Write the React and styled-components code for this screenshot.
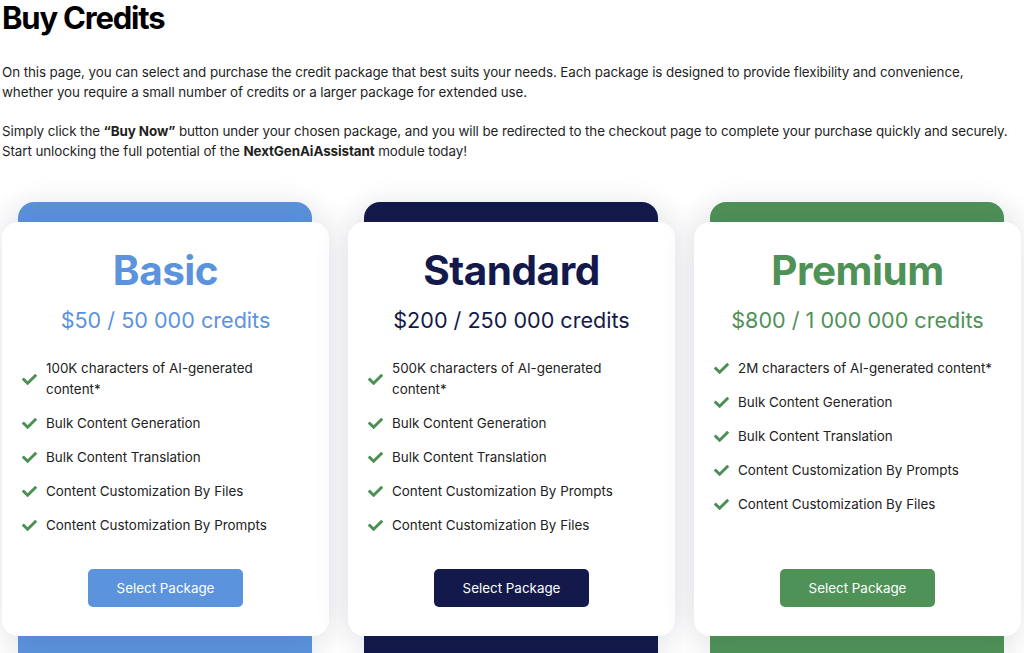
import React from "react";
import styled, { createGlobalStyle } from "styled-components";
import { FaCheck } from "react-icons/fa";

const GlobalStyle = createGlobalStyle`
  body {
    margin: 0;
    background: #fff;
    font-family: Inter, "Liberation Sans", sans-serif;
    color: #1d1d1f;
  }
`;

const Page = styled.div`
  padding: 0 3px 0 2px;
  height: 653px;
  overflow: hidden;
`;

const Heading = styled.h1`
  margin: 0;
  font-size: 31px;
  line-height: 36px;
  font-weight: 700;
  letter-spacing: -1.2px;
  color: #000;
`;

const Intro = styled.p`
  margin: ${(p) => p.$top}px 0 0;
  max-width: 1012px;
  font-size: 13.4px;
  line-height: 20px;
  letter-spacing: -0.09px;
  color: #1f1f1f;
`;

const Grid = styled.div`
  display: grid;
  grid-template-columns: repeat(3, 1fr);
  gap: 19px;
  margin-top: 41px;
`;

const Slot = styled.div`
  position: relative;
  padding-top: 20px;
  display: flex;

  &::before {
    content: "";
    position: absolute;
    top: 0;
    left: 16px;
    right: 17px;
    height: 480px;
    border-radius: 16px;
    background: ${(p) => p.$color};
    box-shadow: 0 0 30px rgba(30, 40, 70, 0.08);
  }
`;

const Card = styled.div`
  position: relative;
  flex: 1;
  display: flex;
  flex-direction: column;
  background: #fff;
  border-radius: 16px;
  padding: 25px 20px 29px;
  box-shadow: 0 0 36px rgba(30, 40, 70, 0.12);
  min-height: 414px;
  box-sizing: border-box;
`;

const Title = styled.h2`
  margin: 0;
  text-align: center;
  font-size: 40.5px;
  line-height: 48px;
  font-weight: 700;
  letter-spacing: -0.5px;
  color: ${(p) => p.$color};
`;

const Price = styled.div`
  margin-top: 10px;
  text-align: center;
  font-size: 21.6px;
  line-height: 30px;
  color: ${(p) => p.$color};
`;

const Features = styled.ul`
  list-style: none;
  margin: 23px 0 0;
  padding: 0;
  display: flex;
  flex-direction: column;
  gap: 13px;
`;

const Feature = styled.li`
  display: flex;
  align-items: center;
  gap: 9px;
  font-size: 13.4px;
  line-height: 21px;
  color: #222;

  svg {
    flex: none;
    color: #4b8f53;
  }
`;

const Button = styled.button`
  margin: auto auto 0;
  width: 155px;
  height: 38px;
  border: none;
  border-radius: 5px;
  background: ${(p) => p.$color};
  color: #fff;
  font-family: inherit;
  font-size: 13.4px;
  cursor: pointer;
`;

const packages = [
  {
    name: "Basic",
    color: "#5b93dc",
    price: "$50 / 50 000 credits",
    features: [
      "100K characters of AI-generated content*",
      "Bulk Content Generation",
      "Bulk Content Translation",
      "Content Customization By Files",
      "Content Customization By Prompts",
    ],
  },
  {
    name: "Standard",
    color: "#131a4b",
    price: "$200 / 250 000 credits",
    features: [
      "500K characters of AI-generated content*",
      "Bulk Content Generation",
      "Bulk Content Translation",
      "Content Customization By Prompts",
      "Content Customization By Files",
    ],
  },
  {
    name: "Premium",
    color: "#4f9257",
    price: "$800 / 1 000 000 credits",
    features: [
      "2M characters of AI-generated content*",
      "Bulk Content Generation",
      "Bulk Content Translation",
      "Content Customization By Prompts",
      "Content Customization By Files",
    ],
  },
];

export default function App() {
  return (
    <Page>
      <GlobalStyle />
      <Heading>Buy Credits</Heading>
      <Intro $top={26}>
        On this page, you can select and purchase the credit package that best suits your
        needs. Each package is designed to provide flexibility and convenience, whether you
        require a small number of credits or a larger package for extended use.
      </Intro>
      <Intro $top={19}>
        Simply click the <b>“Buy Now”</b> button under your chosen package, and you will be
        redirected to the checkout page to complete your purchase quickly and securely. Start
        unlocking the full potential of the <b>NextGenAiAssistant</b> module today!
      </Intro>
      <Grid>
        {packages.map((pkg) => (
          <Slot key={pkg.name} $color={pkg.color}>
            <Card>
              <Title $color={pkg.color}>{pkg.name}</Title>
              <Price $color={pkg.color}>{pkg.price}</Price>
              <Features>
                {pkg.features.map((f) => (
                  <Feature key={f}>
                    <FaCheck size={15} />
                    <span>{f}</span>
                  </Feature>
                ))}
              </Features>
              <Button $color={pkg.color}>Select Package</Button>
            </Card>
          </Slot>
        ))}
      </Grid>
    </Page>
  );
}
